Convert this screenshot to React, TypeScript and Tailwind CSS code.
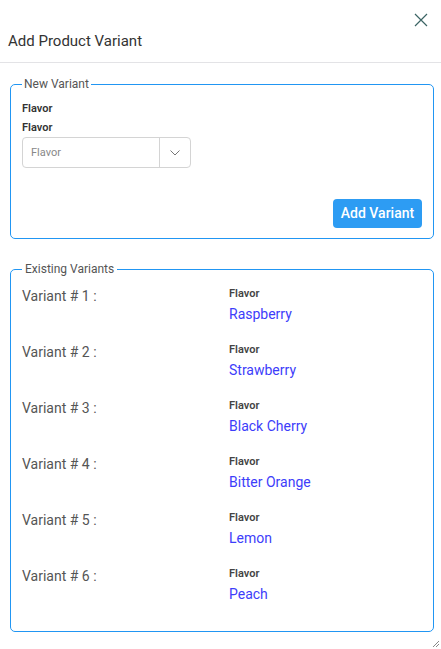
import React from "react";

const variants = ["Raspberry", "Strawberry", "Black Cherry", "Bitter Orange", "Lemon", "Peach"];

export default function App() {
  return (
    <div
      className="relative w-[441px] h-[649px] bg-white overflow-hidden"
      style={{ fontFamily: "Roboto, 'Noto Sans', sans-serif" }}
    >
      <button className="absolute top-[13px] right-[13px] w-[14px] h-[14px] flex items-center justify-center">
        <svg width="14" height="14" viewBox="0 0 14 14">
          <path d="M1 1 L13 13 M13 1 L1 13" stroke="#3b6464" strokeWidth="1.2" fill="none" />
        </svg>
      </button>
      <div className="pt-[30px] pb-[10px] pl-[8px] border-b border-[#e3e3e6]">
        <h1 className="text-[15px] leading-[22px] text-[#333] font-normal">Add Product Variant</h1>
      </div>

      <fieldset className="mt-[14px] mx-[10px] w-[424px] border border-[#2196f3] rounded-[5px] px-[11px] pb-[10px]">
        <legend className="text-[12px] leading-[14px] text-[#555] px-[2px]">New Variant</legend>
        <div className="pt-[8px] text-[11px] leading-[19px] font-semibold text-[#333]">Flavor</div>
        <div className="text-[11px] leading-[19px] font-semibold text-[#333]">Flavor</div>
        <div className="w-[169px] h-[31px] border border-[#d4d4d4] rounded-[4px] flex items-center">
          <div className="flex-1 pl-[8px] pt-[2px] text-[11px] text-[#888]">Flavor</div>
          <div className="w-[31px] h-full border-l border-[#d4d4d4] flex items-center justify-center">
            <svg width="12" height="8" viewBox="0 0 12 8">
              <path d="M1.5 1.5 L6 6 L10.5 1.5" stroke="#777" strokeWidth="1" fill="none" />
            </svg>
          </div>
        </div>
        <div className="flex justify-end mt-[31px]">
          <button className="w-[89px] h-[29px] bg-[#2d9cf3] rounded-[4px] text-white text-[14px] font-medium leading-[29px] text-center">
            Add Variant
          </button>
        </div>
      </fieldset>

      <fieldset className="mt-[23px] mx-[10px] w-[424px] border border-[#2196f3] rounded-[5px] px-[11px] pb-[8px]">
        <legend className="text-[12px] leading-[14px] text-[#555] px-[3px]">Existing Variants</legend>
        <div className="pt-[11px]">
          {variants.map((v, i) => (
            <div key={v} className="flex h-[56px]">
              <div className="w-[207px] text-[14px] leading-[18px] text-[#555]">Variant # {i + 1} :</div>
              <div className="flex flex-col">
                <div className="text-[11px] leading-[14px] font-semibold text-[#444]">Flavor</div>
                <div className="text-[14px] leading-[18px] text-[#3d3dfa] mt-[4px]">{v}</div>
              </div>
            </div>
          ))}
        </div>
      </fieldset>

      <svg className="absolute right-[1px] bottom-[1px]" width="8" height="8" viewBox="0 0 8 8">
        <path d="M7 1 L1 7 M7 4 L4 7" stroke="#888" strokeWidth="1" fill="none" />
      </svg>
    </div>
  );
}
